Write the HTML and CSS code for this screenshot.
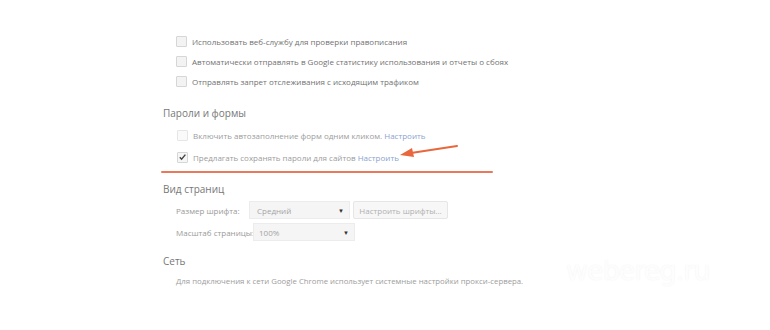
FILE: index.html
```html
<!DOCTYPE html>
<html>
<head>
    <meta charset="utf-8">
    <link rel="stylesheet" href="styles.css">
</head>
<body>
<div class="page">
    <div class="group first">
        <div class="row"><span class="box"></span><span class="label">Использовать веб-службу для проверки правописания</span></div>
        <div class="row"><span class="box"></span><span class="label">Автоматически отправлять в Google статистику использования и отчеты о сбоях</span></div>
        <div class="row"><span class="box"></span><span class="label">Отправлять запрет отслеживания с исходящим трафиком</span></div>
    </div>

    <!-- Пароли и формы -->
    <div class="section passwords">
        <div class="section-title">Пароли и формы</div>
        <div class="row tall"><span class="box disabled"></span><span class="label faint">Включить автозаполнение форм одним кликом. <span class="link">Настроить</span></span></div>
        <div class="row tall"><span class="box checked">
            <svg width="10" height="10" viewBox="0 0 10 10"><path d="M2 5.2 L4 7.4 L8.2 2.4" fill="none" stroke="#444" stroke-width="1.6"/></svg>
        </span><span class="label faint">Предлагать сохранять пароли для сайтов <span class="link">Настроить</span></span></div>
        <div class="underline"></div>
        <svg class="arrow" width="70" height="20" viewBox="0 0 70 20">
            <path d="M60 3 L14 10" stroke="#e8673c" stroke-width="2" stroke-linecap="round"/>
            <path d="M3 12 L15 5 L17 14 Z" fill="#e8673c"/>
        </svg>
    </div>

    <div class="section view">
        <div class="section-title">Вид страниц</div>
        <div class="row tall">
            <span class="field-label font">Размер шрифта:</span>
            <span class="select small">Средний<span class="caret">▼</span></span>
            <span class="btn">Настроить шрифты...</span>
        </div>
        <div class="row tall">
            <span class="field-label zoom">Масштаб страницы:</span>
            <span class="select zoom">100%<span class="caret">▼</span></span>
        </div>
    </div>

    <div class="section net">
        <div class="section-title">Сеть</div>
        <div class="row desc"><span class="label faint">Для подключения к сети Google Chrome использует системные настройки прокси-сервера.</span></div>
    </div>

    <div class="watermark">webereg.ru</div>
</div>
</body>
</html>
```

FILE: styles.css
```css
body {
    margin: 0;
    width: 770px;
    height: 330px;
    background: #fff;
    font-family: "Open Sans", "Noto Sans", sans-serif;
    overflow: hidden;
}
.page {
    position: relative;
    height: 330px;
    padding-left: 163px;
    box-sizing: border-box;
}
.group.first {
    padding-top: 31px;
    padding-left: 13px;
}
.row {
    display: flex;
    align-items: center;
    height: 20px;
}
.row.tall {
    height: 22px;
}
.box {
    width: 9px;
    height: 9px;
    border: 1px solid #d6d6d6;
    background: #f3f3f3;
    border-radius: 1px;
    margin-right: 5px;
    flex-shrink: 0;
    display: flex;
    align-items: center;
    justify-content: center;
}
.box.disabled {
    border-color: #e6e6e6;
    background: #fafafa;
}
.box.checked {
    background: #f6f6f6;
}
.label {
    font-size: 8px;
    color: #727272;
    white-space: nowrap;
}
.label.faint {
    color: #9c9c9c;
}
.link {
    color: #8aa3d0;
}
.section {
    position: relative;
}
.section-title {
    height: 20px;
    line-height: 20px;
    font-size: 10px;
    color: #777;
}
.section .row {
    padding-left: 13px;
}
.passwords {
    margin-top: 12px;
}
.passwords .section-title {
    margin-bottom: 1px;
}
.passwords .row {
    padding-left: 14px;
}
.underline {
    position: absolute;
    left: -2px;
    top: 68px;
    width: 332px;
    height: 2px;
    background: #e8795a;
    border-radius: 1px;
}
.arrow {
    position: absolute;
    left: 234px;
    top: 40px;
}
.view {
    margin-top: 11px;
}
.field-label {
    font-size: 8px;
    color: #9a9a9a;
    white-space: nowrap;
}
.field-label.font {
    width: 73px;
}
.field-label.zoom {
    width: 77px;
}
.select {
    position: relative;
    display: flex;
    align-items: center;
    height: 18px;
    padding-left: 7px;
    box-sizing: border-box;
    background: #f5f5f5;
    border: 1px solid #ececec;
    font-size: 8px;
    color: #a4a4a4;
}
.select.small {
    width: 101px;
}
.select.zoom {
    width: 102px;
    padding-left: 5px;
}
.caret {
    position: absolute;
    right: 5px;
    top: 5px;
    font-size: 6px;
    color: #333;
}
.btn {
    margin-left: 3px;
    height: 18px;
    width: 95px;
    box-sizing: border-box;
    display: flex;
    align-items: center;
    justify-content: center;
    background: #f7f7f7;
    border: 1px solid #e6e6e6;
    border-radius: 2px;
    font-size: 8px;
    color: #b0b0b0;
    white-space: nowrap;
}
.net {
    margin-top: 8px;
}
.desc .label {
    font-size: 7.8px;
}
.watermark {
    position: absolute;
    left: 566px;
    top: 255px;
    font-size: 27px;
    font-family: "DejaVu Sans", sans-serif;
    color: #fdfdfd;
    text-shadow: 0 0 2px #f2f2f2;
    letter-spacing: -1px;
}
```
